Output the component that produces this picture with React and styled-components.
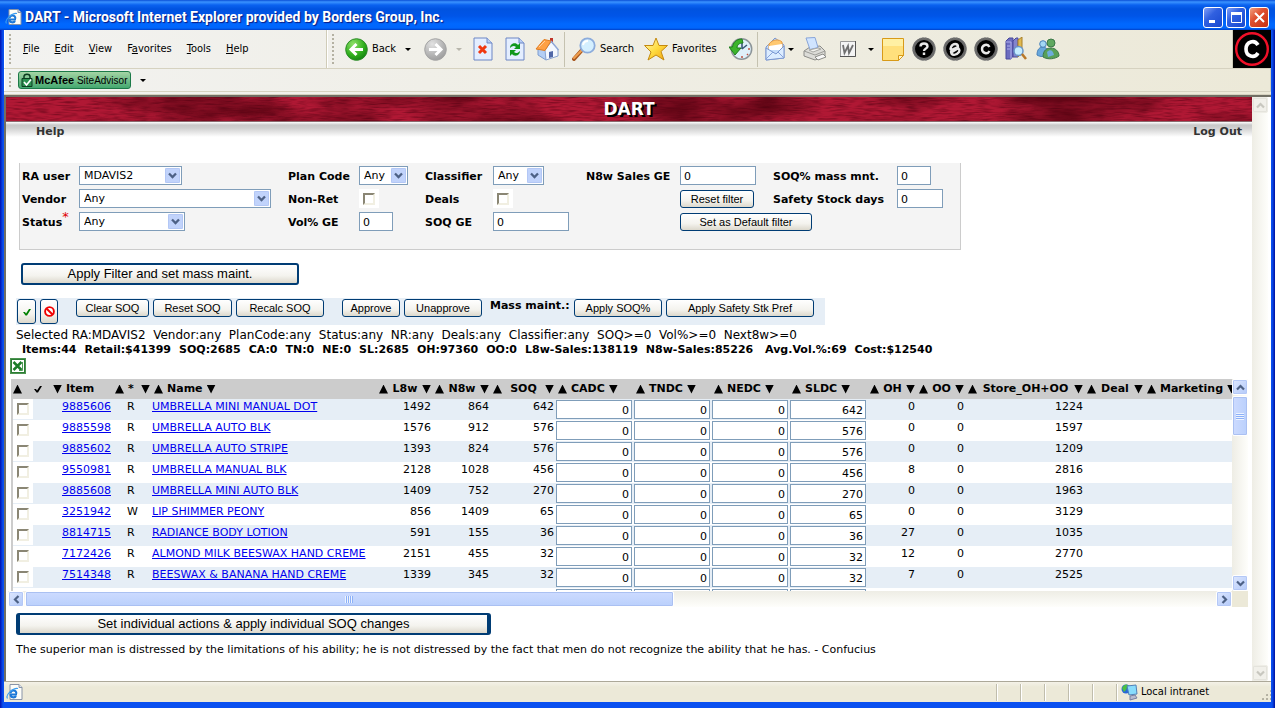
import React from 'react';
import styled, { createGlobalStyle, css } from 'styled-components';

const verdana = '"DejaVu Sans", Verdana, sans-serif';
const tahoma = '"DejaVu Sans Condensed", Tahoma, "DejaVu Sans", sans-serif';
const arial = '"Liberation Sans", Arial, sans-serif';

const GlobalStyle = createGlobalStyle`
	* { box-sizing: border-box; }
	body { margin: 0; background: #0a3fd0; }
	button, input, select { margin: 0; font: inherit; color: inherit; }
`;

const Frame = styled.div`
	display: flex;
	flex-direction: column;
	min-height: 100vh;
	padding: 0 4px 6px;
	font: 11px/14px ${verdana};
	color: #000;
	background: linear-gradient(90deg, #0010b0 0, #0a50f0 3px, #0a50f0 calc(100% - 3px), #0010a0 100%);
`;

/* title bar */

const TitleBar = styled.header`
	display: flex;
	align-items: center;
	gap: 3px;
	height: 30px;
	margin: 0 -4px;
	padding: 4px 6px 0 5px;
	background: linear-gradient(#0a4fd6 0, #3a93ff 2px, #0a62f0 5px, #0053e0 9px, #0055e8 16px, #0068ff 24px, #0066fc 28px, #0040c8 30px);
`;

const Title = styled.h1`
	flex: 1;
	margin: 0;
	font: bold 14px/18px Roboto, sans-serif;
	color: #fff;
	text-shadow: 1px 1px 1px #0a1a80;
	white-space: nowrap;
`;

const WindowButton = styled.button`
	display: grid;
	place-items: center;
	width: 20px;
	height: 21px;
	padding: 0;
	border: 1px solid #fff;
	border-radius: 3px;
	color: #fff;
	background: ${p => p.$close
		? 'linear-gradient(135deg, #f0a080, #e05030 40%, #c83010)'
		: 'linear-gradient(135deg, #80a0f8, #3060e0 40%, #1848d0)'};
`;

/* tool bars */

const ToolRow = styled.div`
	display: flex;
	height: ${p => p.$h}px;
	border-bottom: 1px solid #d6d2c0;
	background: linear-gradient(90deg, #f2f2f0, #ece9d8);
	font-family: ${tahoma};
`;

const Band = styled.div`
	display: flex;
	align-items: center;
	height: 100%;
	width: ${p => p.$w ? p.$w + 'px' : 'auto'};
	flex: ${p => p.$w ? 'none' : '1'};
	padding-left: 4px;
	border-right: 1px solid #d0ccb8;
	border-left: 1px solid #fff;
`;

const Grip = styled.span`
	width: 2px;
	height: ${p => p.$h}px;
	margin-right: ${p => p.$gap}px;
	background: repeating-linear-gradient(#b4b1a2 0, #b4b1a2 2px, transparent 2px, transparent 4px);
`;

const Menu = styled.nav`
	display: flex;
	gap: 15px;
`;

const MenuLink = styled.a`
	color: #000;
	text-decoration: none;
`;

const Tool = styled.button`
	display: flex;
	align-items: center;
	gap: 4px;
	width: ${p => p.$w}px;
	height: 30px;
	padding: 0;
	border: 0;
	background: none;
	flex: none;
	white-space: nowrap;
`;

const Divider = styled.span`
	width: 1px;
	height: 35px;
	margin-right: 7px;
	background: #c5c2b0;
`;

const Caret = styled.span`
	margin-left: ${p => p.$gap || 5}px;
	border: 3px solid transparent;
	border-top-color: ${p => p.$off ? '#b8b6ac' : '#000'};
	border-bottom: 0;
`;

const BrandTile = styled.div`
	display: grid;
	place-items: center;
	width: 38px;
	background: #000;
`;

const Advisor = styled.button`
	display: flex;
	align-items: center;
	gap: 2px;
	height: 18px;
	padding: 0 3px 0 2px;
	border: 1px solid #1c7a48;
	border-radius: 3px;
	background: linear-gradient(#a4d4a4, #44a870);
	font: 10px/14px ${arial};
	white-space: nowrap;

	b { font-size: 11px; }
`;

/* page */

const Content = styled.div`
	display: flex;
	flex: 1;
	padding-right: 3px;
	border: solid #716f64;
	border-width: 2px 0 0 2px;
	background: #fff;
`;

const Page = styled.main`
	flex: 1;
	min-width: 0;
`;

const Banner = styled.div`
	position: relative;
	height: 25px;
	border-bottom: 1px solid #8a6a6e;
	background: #a0142e;
	overflow: hidden;

	svg { position: absolute; inset: 0; width: 100%; height: 100%; }
`;

const BannerTitle = styled.h2`
	position: relative;
	margin: 0;
	font: bold 17px/24px ${verdana};
	text-align: center;
	color: #fff;
	text-shadow: 2px 2px #000;
`;

const TopLinks = styled.nav`
	display: flex;
	justify-content: space-between;
	height: 17px;
	padding: 3px 10px 0 30px;
	background: linear-gradient(#fff 0, #c8c8c8 3px, #cfcfcf 6px, #fff 15px);

	a { font-weight: bold; color: #333; text-decoration: none; }
`;

const Filters = styled.form`
	display: grid;
	grid-template-columns: 57px 209px 71px 66px 68px 93px 94px 93px 124px auto;
	grid-auto-rows: 19px;
	row-gap: 4px;
	align-items: center;
	width: 942px;
	height: 87px;
	margin: 24px 0 0 13px;
	padding: 3px 0 0 2px;
	border: 1px solid #ccc;
	border-top: 0;
	background: #f4f4f4;
`;

const Label = styled.label`
	padding-top: 2px;
	font-weight: bold;
	white-space: nowrap;

	sup { font-weight: normal; font-size: 13px; line-height: 0; color: #e00000; }
`;

const PickWrap = styled.span`
	position: relative;
	width: ${p => p.$w}px;
	height: 19px;

	svg { position: absolute; top: 2px; right: 2px; pointer-events: none; }
`;

const Pick = styled.select`
	appearance: none;
	width: 100%;
	height: 19px;
	padding: 1px 0 0 4px;
	border: 1px solid #7f9db9;
	border-radius: 0;
	background: #fff;
`;

const Field = styled.input`
	display: block;
	width: ${p => p.$w}px;
	height: 19px;
	padding: ${p => p.$num ? '1px 2px 0' : '1px 3px 0'};
	border: 1px solid #7f9db9;
	border-radius: 0;
	background: #fff;
	text-align: ${p => p.$num ? 'right' : 'left'};
`;

const TickBack = styled.span`
	display: grid;
	place-items: center;
	width: 20px;
	height: 19px;
	background: #fff;
`;

const Tick = styled.input`
	appearance: none;
	width: 12px;
	height: 12px;
	border: 2px solid;
	border-color: #8a8674 #f1efe2 #f1efe2 #8a8674;
	background: #fff;

	&:checked { background: #21a121; }
`;

const XpButton = styled.button`
	display: grid;
	place-items: center;
	width: ${p => p.$w}px;
	height: ${p => p.$h || 18}px;
	padding: 0;
	border: 1px solid #003c74;
	border-radius: 3px;
	background: linear-gradient(#fff, #f4f3ee 60%, #dcd8cc);
	font: 11px/14px ${arial};
	white-space: nowrap;
	${p => p.$span && css`grid-column: span ${p.$span};`}
	${p => p.$big && css`
		height: 22px;
		border-width: ${p.$big === 'wide' ? '2px 4px' : '2px'};
		font: 13px/16px ${arial};
	`}
`;

const ApplyRow = styled.div`
	padding: 13px 0 13px 15px;
`;

const Actions = styled.div`
	display: flex;
	align-items: flex-start;
	gap: 4px;
	width: 809px;
	height: 27px;
	margin-left: 10px;
	padding: 1px 1px 0;
	background: #e6eef6;
`;

const ActionGroup = styled.div`
	display: flex;
	gap: 4px;
	margin-right: ${p => p.$after}px;

	& > b { width: 80px; line-height: 14px; }
`;

const Summary = styled.p`
	margin: 3px 0 0 10px;
	font-size: 12px;
	white-space: pre;
`;

const Totals = styled.p`
	display: flex;
	gap: 8px;
	margin: 1px 0 0 16px;
	font-weight: bold;
	white-space: nowrap;
`;

const ExportLink = styled.a`
	display: block;
	width: 16px;
	height: 16px;
	margin: 1px 0 5px 4px;
`;

/* item grid */

const GridArea = styled.div`
	display: grid;
	grid-template-columns: 1fr 16px;
	margin: 0 4px 0 2px;
`;

const GridView = styled.div`
	height: 212px;
	margin-left: 3px;
	overflow: hidden;
`;

const Items = styled.table`
	table-layout: fixed;
	width: 100%;
	min-width: 1234px;
	border-spacing: 0;

	th, td { padding: 0; }
	th { height: 20px; background: #ccc; text-align: left; }
	td { height: 21px; vertical-align: top; white-space: nowrap; }
	tbody tr:nth-child(odd) { background: #e6eef6; }
	tbody td:first-child { border-left: 2px solid #ccc; }
	a { color: #0000ee; }
`;

const Cell = styled.td`
	text-align: ${p => p.$num ? 'right' : 'left'};
	padding: 1px ${p => p.$box ? 0 : 2}px 0 ${p => p.$left || 0}px !important;
`;

const HeadCell = styled.div`
	display: flex;
	align-items: center;
	justify-content: ${p => p.$spread ? 'space-between' : 'flex-start'};
	gap: ${p => p.$spread ? 0 : 4}px;
	padding: 0 2px;
	white-space: nowrap;
`;

const Sort = styled.button`
	display: block;
	width: 9px;
	height: 9px;
	padding: 0;
	border: 0;
	background: #000;
	clip-path: ${p => p.$down ? 'polygon(0 0, 100% 0, 50% 100%)' : 'polygon(50% 0, 100% 100%, 0 100%)'};
	flex: none;
	${p => p.$push && css`margin-left: auto;`}
`;

const RowTick = styled.span`
	display: block;
	width: 20px;
	height: 20px;
	padding: 4px 0 0 4px;
	background: #fff;

	input { display: block; }
`;

/* scroll bars */

const Scroll = styled.div`
	display: flex;
	flex-direction: ${p => p.$across ? 'row' : 'column'};
	gap: 1px;
	${p => p.$across ? 'height: 16px;' : 'width: 16px;'}
	background: ${p => p.$across
		? 'linear-gradient(#eeede5, #fefefb)'
		: 'linear-gradient(90deg, #eeede5, #fefefb)'};
`;

const ScrollButton = styled.button`
	display: grid;
	place-items: center;
	width: 16px;
	height: 16px;
	padding: 0;
	border: 1px solid ${p => p.$off ? '#eeede6' : '#fff'};
	border-radius: 2px;
	box-shadow: inset 0 0 0 1px ${p => p.$off ? '#e4e3dc' : '#b4c8f6'};
	background: ${p => p.$off ? '#f1f0ea' : 'linear-gradient(135deg, #dde7ff, #b4caf9)'};
	color: ${p => p.$off ? '#c8c7bf' : '#4d6185'};
	flex: none;
`;

const Thumb = styled.div`
	display: grid;
	place-items: center;
	border: 1px solid #fff;
	border-radius: 2px;
	box-shadow: inset 0 0 0 1px #aac0f2;
	background: linear-gradient(${p => p.$across ? '180deg' : '90deg'}, #cddbff, #bad0fc);
	${p => p.$across ? 'width: 53%;' : 'height: 40px;'}

	&::after {
		content: '';
		width: 8px;
		height: 7px;
		background: repeating-linear-gradient(${p => p.$across ? '90deg' : '180deg'}, #eef4fe 0, #eef4fe 1px, #8cb0f8 1px, #8cb0f8 2px);
	}
`;

const Fill = styled.span`
	flex: 1;
`;

const Corner = styled.span`
	background: #ece9d8;
`;

const Closing = styled.div`
	padding: 6px 0 0 10px;

	p { margin: 8px 0 0; }
`;

/* status bar */

const StatusBar = styled.footer`
	display: flex;
	align-items: center;
	height: 21px;
	padding-left: 2px;
	border-top: 1px solid #aca899;
	background: linear-gradient(#f4f2e8, #ece9d8 5px);
	font-family: ${tahoma};
`;

const Pane = styled.span`
	display: flex;
	align-items: center;
	gap: 3px;
	width: ${p => p.$w}px;
	height: 17px;
	padding-left: 4px;
	border-left: 1px solid #c0bdac;
	box-shadow: inset 1px 0 #fff;
	white-space: nowrap;
`;

const SizeGrip = styled.span`
	align-self: flex-end;
	width: 11px;
	height: 11px;
	margin-left: auto;
	clip-path: polygon(100% 0, 100% 100%, 0 100%);
	background: conic-gradient(#b4b1a2 90deg, transparent 0) 0 0 / 4px 4px;
`;

/* icons */

const Chevron = ({ dir = 'down' }) => {
	const turn = { down: 0, left: 90, up: 180, right: 270 }[dir];
	return (
		<svg width="9" height="9" viewBox="0 0 9 9">
			<path d="M1 2.5 4.5 6 8 2.5" fill="none" stroke="currentColor" strokeWidth="2.2" transform={`rotate(${turn} 4.5 4.5)`} />
		</svg>
	);
};

const PickArrow = () => (
	<svg width="15" height="15" viewBox="0 0 15 15">
		<rect width="15" height="15" rx="1" fill="#c1d3fb" />
		<rect x=".5" y=".5" width="14" height="14" rx="1" fill="none" stroke="#b3c7f5" />
		<path d="m4 5.5 3.5 3.5L11 5.5" fill="none" stroke="#4d6185" strokeWidth="2.3" />
	</svg>
);

const IeIcon = () => (
	<svg width="17" height="17" viewBox="0 0 17 17">
		<path d="M4 .5h9l3 3V15.500H4z" fill="#fdfdf8" stroke="#8894a8" />
		<path d="M13 .5v3h3" fill="#dde4f0" stroke="#8894a8" />
		<path d="M11 10.500H4.500C4.500 14 9 14 10 12M4.500 9C5 5.500 10 5.500 10.500 9.500" fill="none" stroke="#1c78d8" strokeWidth="2" />
		<path d="M1.500 14.500C-1 11 7 3.500 12 4.500" fill="none" stroke="#3a9cf0" strokeWidth="1.200" />
	</svg>
);

const ArrowBall = ({ off }) => (
	<svg width="23" height="23" viewBox="0 0 23 23">
		<defs>
			<radialGradient id={off ? 'ballOff' : 'ballOn'} cx=".35" cy=".25" r=".85">
				<stop offset="0" stopColor={off ? '#e2e2e2' : '#8fe06a'} />
				<stop offset=".6" stopColor={off ? '#b4b4b4' : '#2fae1c'} />
				<stop offset="1" stopColor={off ? '#989898' : '#0f7a10'} />
			</radialGradient>
		</defs>
		<circle cx="11.5" cy="11.5" r="10.8" fill={`url(#${off ? 'ballOff' : 'ballOn'})`} stroke={off ? '#a4a4a4' : '#2c8c28'} />
		<path
			d="M18 11.5H6.5M11.5 6 6 11.5l5.500 5.500"
			transform={off ? 'rotate(180 11.5 11.5)' : undefined}
			fill="none" stroke="#fff" strokeWidth="3"
		/>
	</svg>
);

const Sheet = ({ children }) => (
	<svg width="20" height="24" viewBox="0 0 20 24">
		<path d="M1 1h13l5 5v17H1z" fill="#e4eeff" stroke="#6d86c4" />
		<path d="M14 1v5h5" fill="#b8cdf4" stroke="#6d86c4" />
		{children}
	</svg>
);

const HomeIcon = () => (
	<svg width="24" height="24" viewBox="0 0 24 24">
		<path d="M15 1h3v6h-3z" fill="#c03428" />
		<path d="M3 12v6l8 5V13z" fill="#b4cef4" stroke="#7c9cd0" />
		<path d="m10 13 6-8 7 7v7l-12 4z" fill="#f4f8ff" stroke="#8aa4d0" />
		<path d="m14 15 4-1v6l-4 1z" fill="#5068a8" />
		<path d="M1 12 9 2.500 16 4l-6 9.500z" fill="#ffa044" stroke="#e07c20" />
		<path d="m4 10 6-6" stroke="#ffd0a0" />
		<path d="m16 4 7.500 9" stroke="#90a8d8" strokeWidth="1.500" />
	</svg>
);

const Magnifier = () => (
	<svg width="24" height="24" viewBox="0 0 24 24">
		<path d="m10 13-8 9" stroke="#a85820" strokeWidth="4" strokeLinecap="round" />
		<path d="m10 13-8 8" stroke="#f0a050" strokeWidth="2" strokeLinecap="round" />
		<circle cx="15.5" cy="8.5" r="7.2" fill="#d4efff" stroke="#8cacdc" strokeWidth="1.8" />
		<path d="M11 8a5 5 0 0 1 5-4" fill="none" stroke="#fff" strokeWidth="2" />
	</svg>
);

const StarIcon = () => (
	<svg width="24" height="24" viewBox="0 0 24 24">
		<defs>
			<linearGradient id="gold" x2="1" y2="1">
				<stop offset="0" stopColor="#fffac0" />
				<stop offset=".5" stopColor="#ffdc40" />
				<stop offset="1" stopColor="#f0a010" />
			</linearGradient>
		</defs>
		<path d="m12 1 3 7.500h8.500L17 14.500l3 8.500-8-5-8 5 3-8-6.500-6.500H9z" fill="url(#gold)" stroke="#c48a10" strokeLinejoin="round" />
	</svg>
);

const HistoryIcon = () => (
	<svg width="24" height="24" viewBox="0 0 24 24">
		<circle cx="12.5" cy="12" r="10.2" fill="#dff0fa" stroke="#8c9498" strokeWidth="1.5" />
		<path d="M13 12V5M13 12l5-4" stroke="#385878" strokeWidth="1.6" />
		<path d="M19 12h2M13 19v2M18 17l1 1" stroke="#c05040" strokeWidth="1.5" />
		<path d="M13 2C7 2 4 6 3.500 10H0l6 8 6-7H8c0-3 2-5 6-5z" fill="#3cb42c" stroke="#1c7c1c" />
	</svg>
);

const MailIcon = () => (
	<svg width="21" height="24" viewBox="0 0 21 24">
		<path d="M1 10 10 1l9 7v13L1 23z" fill="#c4dcfa" stroke="#7c98d0" />
		<path d="M4 7c4-5 10-5 13-2v7H4z" fill="#ffc870" stroke="#e89c40" />
		<path d="m4 9 13-2v6H4z" fill="#fff" />
		<path d="m1 11 10 6 8-8v12L1 23z" fill="#dcecff" stroke="#7c98d0" />
		<path d="m1 22 7-7M19 21l-6-6" stroke="#88a4dc" />
	</svg>
);

const PrinterIcon = () => (
	<svg width="24" height="24" viewBox="0 0 24 24">
		<path d="m1 14 6-4 10-1 5 5v5l-10 4-11-4z" fill="#dcdcd8" stroke="#8c8c88" />
		<path d="m1 14 11 4 10-4" fill="none" stroke="#9c9c98" />
		<path d="m3 1 9-.5 3 10-8 2z" fill="#d0e4ff" stroke="#88a4d8" />
		<path d="m6 13 9-2 3 1-8 3z" fill="#f4f4f0" stroke="#a8a8a4" />
		<path d="m12 20 8-3 3 3-8 3z" fill="#f8f8f8" stroke="#8c8c88" />
	</svg>
);

const WordIcon = () => (
	<svg width="16" height="16" viewBox="0 0 16 16">
		<path d="M.5.5h15v15H.5z" fill="#f4f4f4" stroke="#999" />
		<path d="M15.500 0v15.500H0" fill="none" stroke="#555" />
		<path d="m3 4 1.500 8L8 5l1 7 4-8" fill="none" stroke="#707070" strokeWidth="1.8" />
	</svg>
);

const NoteIcon = () => (
	<svg width="22" height="23" viewBox="0 0 22 23">
		<path d="M.5.5h21v17l-5 5H.5z" fill="#ffe07c" stroke="#d89a18" />
		<path d="M1 1h20v7H1z" fill="#fff0a4" />
		<path d="M21.500 17.500h-5v5z" fill="#fff6c8" stroke="#d89a18" />
	</svg>
);

const Badge = ({ children }) => (
	<svg width="24" height="24" viewBox="0 0 24 24">
		<circle cx="12" cy="12" r="10.3" fill="#000" stroke="#686868" strokeWidth="2.6" />
		<circle cx="12" cy="12" r="11.3" fill="none" stroke="#8a8a8a" strokeDasharray="1.5 1.5" />
		<g fill="none" stroke="#e8e8e8" strokeWidth="2.4">{children}</g>
	</svg>
);

const BooksIcon = () => (
	<svg width="22" height="24" viewBox="0 0 22 24">
		<path d="m1 4 3-3h4v18l-2 3H1z" fill="#6c6cc0" stroke="#48489c" />
		<path d="M1 5h5v17M2 9h3M2 12h3" fill="none" stroke="#b0b0ec" />
		<path d="m8 4 3-3h2v19H8z" fill="#8484cc" stroke="#48489c" />
		<path d="m13 3 4-3v16l-4 4z" fill="#e0b850" stroke="#a88028" />
		<circle cx="13.5" cy="14" r="4.5" fill="#c4ecff" stroke="#6894c8" strokeWidth="1.5" />
		<path d="m17 17 4 5" stroke="#b87828" strokeWidth="2.5" />
	</svg>
);

const PeopleIcon = () => (
	<svg width="24" height="24" viewBox="0 0 24 24">
		<path d="M1 18c0-6 3-8 6-8s6 3 5 8c-3 2-8 2-11 0z" fill="#68a8dc" stroke="#4880b8" />
		<circle cx="7" cy="7" r="3.3" fill="#a4d8f4" stroke="#4880b8" />
		<path d="M7 20c0-7 4-9 8-9s8 3 8 8c-4 3-11 4-16 1z" fill="#58a058" stroke="#3c7848" />
		<circle cx="15" cy="6" r="4" fill="#60a860" stroke="#3c7848" />
		<path d="M11 15c3-3 6-2 7 3l-6 2z" fill="#6cacdc" />
	</svg>
);

const BrandIcon = () => (
	<svg width="36" height="36" viewBox="0 0 36 36">
		<circle cx="18" cy="18" r="15.8" fill="#000" stroke="#f01028" strokeWidth="2.4" />
		<path d="M24 14c-3.500-6-12-3.500-12 4s8.500 10 12 4" fill="none" stroke="#fff" strokeWidth="3.6" />
	</svg>
);

const LockIcon = () => (
	<svg width="12" height="14" viewBox="0 0 12 14">
		<path d="M3 6V3.500C3 .5 9 .5 9 3.500V6" fill="none" stroke="#0c3c20" strokeWidth="1.5" />
		<path d="M1 5.500h10v8H1z" fill="#2c9050" stroke="#0c3c20" />
		<path d="m3 9 2.500 3L10 6.500" fill="none" stroke="#fff" strokeWidth="1.7" />
	</svg>
);

const CheckMark = ({ color }) => (
	<svg width="8" height="8" viewBox="0 0 8 8">
		<path d="M0 4h2l1 1.500L6 1h2L4 7.500H2.500z" fill={color} />
	</svg>
);

const BlockIcon = () => (
	<svg width="11" height="11" viewBox="0 0 11 11">
		<circle cx="5.5" cy="5.5" r="4.4" fill="#fff" stroke="#f00000" strokeWidth="1.9" />
		<path d="m2.500 2.500 6 6" stroke="#f00000" strokeWidth="1.9" />
	</svg>
);

const ExcelIcon = () => (
	<svg width="16" height="16" viewBox="0 0 16 16">
		<path d="M1 1h14v14H1z" fill="#fff" stroke="#2c7c34" strokeWidth="2" />
		<path d="M.5.5h15v15H.5z" fill="none" stroke="#6cac6c" strokeDasharray="1 1" />
		<path d="m3.500 4 8 8M11.500 4l-8 8" stroke="#1c7c28" strokeWidth="2.5" />
		<path d="M12.500 4v8.500H9" fill="none" stroke="#4c9c54" />
	</svg>
);

const NetIcon = () => (
	<svg width="17" height="17" viewBox="0 0 17 17">
		<circle cx="5" cy="5" r="4.5" fill="#2868d8" />
		<path d="M1 4c2-4 5-4 6-3L5 6 3 8z" fill="#4cc040" />
		<path d="m6 2 9-1 1 9-8 1z" fill="#88dcfc" stroke="#5080b8" />
		<path d="m9 12 5-1 2 3-7 2z" fill="#b8bcd0" stroke="#7880a0" />
	</svg>
);

const Fabric = () => (
	<svg aria-hidden="true" preserveAspectRatio="none">
		<filter id="weave" x="0" y="0" width="100%" height="100%" colorInterpolationFilters="sRGB">
			<feTurbulence type="fractalNoise" baseFrequency="0.07 0.6" numOctaves="2" seed="4" />
			<feColorMatrix values="0 0 0 0 0.3  0 0 0 0 0  0 0 0 0 0.06  1.2 0 0 0 -0.5" />
		</filter>
		<filter id="clouds" x="0" y="0" width="100%" height="100%" colorInterpolationFilters="sRGB">
			<feTurbulence type="fractalNoise" baseFrequency="0.008 0.025" numOctaves="4" seed="9" />
			<feColorMatrix values="0 0 0 0 0.38  0 0 0 0 0.02  0 0 0 0 0.08  3 0 0 0 -1.15" />
		</filter>
		<rect width="100%" height="100%" fill="#b01834" />
		<rect width="100%" height="100%" filter="url(#clouds)" />
		<rect width="100%" height="100%" filter="url(#weave)" />
	</svg>
);

/* data */

const menus = [['', 'F', 'ile'], ['', 'E', 'dit'], ['', 'V', 'iew'], ['F', 'a', 'vorites'], ['', 'T', 'ools'], ['', 'H', 'elp']];

const totals = [
	'Items:44', 'Retail:$41399', 'SOQ:2685', 'CA:0', 'TN:0', 'NE:0', 'SL:2685', 'OH:97360', 'OO:0',
	'L8w-Sales:138119', 'N8w-Sales:85226', ' Avg.Vol.%:69', 'Cost:$12540',
];

const widths = [40, 75, 26, 225, 56, 58, 65, 78, 78, 78, 78, 49, 49, 119, 60];

const rows = [
	['9885606', 'R', 'UMBRELLA MINI MANUAL DOT', 1492, 864, 642, 0, 0, 1224],
	['9885598', 'R', 'UMBRELLA AUTO BLK', 1576, 912, 576, 0, 0, 1597],
	['9885602', 'R', 'UMBRELLA AUTO STRIPE', 1393, 824, 576, 0, 0, 1209],
	['9550981', 'R', 'UMBRELLA MANUAL BLK', 2128, 1028, 456, 8, 0, 2816],
	['9885608', 'R', 'UMBRELLA MINI AUTO BLK', 1409, 752, 270, 0, 0, 1963],
	['3251942', 'W', 'LIP SHIMMER PEONY', 856, 1409, 65, 0, 0, 3129],
	['8814715', 'R', 'RADIANCE BODY LOTION', 591, 155, 36, 27, 0, 1035],
	['7172426', 'R', 'ALMOND MILK BEESWAX HAND CREME', 2151, 455, 32, 12, 0, 2770],
	['7514348', 'R', 'BEESWAX & BANANA HAND CREME', 1339, 345, 32, 7, 0, 2525],
	['', '', '', '', '', '', '', '', ''],
];

const PickBox = ({ id, w, value }) => (
	<PickWrap $w={w}>
		<Pick id={id} defaultValue={value}>
			<option>{value}</option>
		</Pick>
		<PickArrow />
	</PickWrap>
);

const Head = ({ text, spread }) => (
	<th>
		<HeadCell $spread={spread}>
			<Sort aria-label={`Sort ${text} up`} />
			{text}
			<Sort $down aria-label={`Sort ${text} down`} />
		</HeadCell>
	</th>
);

const ItemRow = ({ row }) => {
	const [item, code, name, l8w, n8w, soq, oh, oo, store] = row;
	const dcs = [['CADC', 0], ['TNDC', 0], ['NEDC', 0], ['SLDC', soq]];
	return (
		<tr>
			<td><RowTick><Tick type="checkbox" aria-label={`Select ${item}`} /></RowTick></td>
			<Cell $left={11}><a href="#item">{item}</a></Cell>
			<Cell $left={1}>{code}</Cell>
			<Cell><a href="#item">{name}</a></Cell>
			<Cell $num>{l8w}</Cell>
			<Cell $num>{n8w}</Cell>
			<Cell $num>{soq}</Cell>
			{dcs.map(([dc, qty]) => (
				<Cell $box key={dc}>
					<Field $w={76} $num aria-label={`${dc} ${item}`} defaultValue={item ? qty : ''} />
				</Cell>
			))}
			<Cell $num>{oh}</Cell>
			<Cell $num>{oo}</Cell>
			<Cell $num>{store}</Cell>
			<td />
			<td />
		</tr>
	);
};

const Toolbar = () => (
	<>
		<ToolRow $h={39}>
			<Band $w={323}>
				<Grip $h={31} $gap={12} />
				<Menu>
					{menus.map(([a, key, b]) => (
						<MenuLink href="#menu" key={a + key + b}>{a}<u>{key}</u>{b}</MenuLink>
					))}
				</Menu>
			</Band>
			<Band>
				<Grip $h={31} $gap={11} />
				<Tool $w={79}><ArrowBall />Back<Caret /></Tool>
				<Tool $w={49}><ArrowBall off /><Caret $off /></Tool>
				<Tool $w={32} aria-label="Stop">
					<Sheet><path d="m6 9 7 7M13 9l-7 7" stroke="#f03810" strokeWidth="3" /></Sheet>
				</Tool>
				<Tool $w={30} aria-label="Refresh">
					<Sheet>
						<path d="M5 11c0-5 6-6 8-3l2-2v6H9l2-2c-2-2-4-1-6 1zM15 14c0 5-6 6-8 3l-2 2v-6h6l-2 2c2 2 4 1 6-1z" fill="#10981c" />
					</Sheet>
				</Tool>
				<Tool $w={29} aria-label="Home"><HomeIcon /></Tool>
				<Divider />
				<Tool $w={72}><Magnifier />Search</Tool>
				<Tool $w={85}><StarIcon />Favorites</Tool>
				<Tool $w={28} aria-label="History"><HistoryIcon /></Tool>
				<Divider />
				<Tool $w={38} aria-label="Mail"><MailIcon /><Caret $gap={-2} /></Tool>
				<Tool $w={37} aria-label="Print"><PrinterIcon /></Tool>
				<Tool $w={42} aria-label="Edit"><WordIcon /><Caret $gap={8} /></Tool>
				<Tool $w={30} aria-label="Discuss"><NoteIcon /></Tool>
				<Tool $w={31} aria-label="Help">
					<Badge><path d="M8.500 9.500c0-4 7-4 7 0 0 2-3.500 2-3.500 4.500M12 15.500V18" /></Badge>
				</Tool>
				<Tool $w={31} aria-label="Encarta">
					<Badge><path d="m8 13 7-3c0-4-5-4-7 0-1 2 0 4 2 3M8 14c0 5 5 5 8 1 1-2 0-4-2-3l-5 3" /></Badge>
				</Tool>
				<Tool $w={31} aria-label="Circuit">
					<Badge><path d="M15.500 10c-2-4-7.500-2-7.500 2s5.500 6 7.500 2" /></Badge>
				</Tool>
				<Tool $w={31} aria-label="Research"><BooksIcon /></Tool>
				<Tool $w={24} aria-label="Messenger"><PeopleIcon /></Tool>
			</Band>
			<BrandTile><BrandIcon /></BrandTile>
		</ToolRow>
		<ToolRow $h={23}>
			<Band>
				<Grip $h={15} $gap={7} />
				<Advisor><LockIcon /><span><b>McAfee</b> SiteAdvisor</span></Advisor>
				<Caret $gap={9} />
			</Band>
		</ToolRow>
		<ToolRow $h={3} />
	</>
);

const FilterPanel = () => (
	<Filters onSubmit={e => e.preventDefault()}>
		<Label htmlFor="user">RA user</Label>
		<PickBox id="user" w={103} value="MDAVIS2" />
		<Label htmlFor="plan">Plan Code</Label>
		<PickBox id="plan" w={49} value="Any" />
		<Label htmlFor="classifier">Classifier</Label>
		<PickBox id="classifier" w={51} value="Any" />
		<Label htmlFor="n8w">N8w Sales GE</Label>
		<Field id="n8w" $w={76} defaultValue="0" />
		<Label htmlFor="mass">SOQ% mass mnt.</Label>
		<Field id="mass" $w={34} defaultValue="0" />

		<Label htmlFor="vendor">Vendor</Label>
		<PickBox id="vendor" w={192} value="Any" />
		<Label htmlFor="nonret">Non-Ret</Label>
		<TickBack><Tick id="nonret" type="checkbox" /></TickBack>
		<Label htmlFor="deals">Deals</Label>
		<TickBack><Tick id="deals" type="checkbox" /></TickBack>
		<span />
		<XpButton $w={74}>Reset filter</XpButton>
		<Label htmlFor="safety">Safety Stock days</Label>
		<Field id="safety" $w={46} defaultValue="0" />

		<Label htmlFor="status">Status<sup>*</sup></Label>
		<PickBox id="status" w={106} value="Any" />
		<Label htmlFor="vol">Vol% GE</Label>
		<Field id="vol" $w={34} defaultValue="0" />
		<Label htmlFor="soq">SOQ GE</Label>
		<Field id="soq" $w={76} defaultValue="0" />
		<span />
		<XpButton $w={132} $span={3}>Set as Default filter</XpButton>
	</Filters>
);

const ItemGrid = () => (
	<GridArea>
		<GridView>
			<Items>
				<colgroup>
					{widths.map((w, i) => <col key={i} style={{ width: w }} />)}
					<col />
				</colgroup>
				<thead>
					<tr>
						<th><HeadCell><Sort aria-label="Sort ticks" /><Fill /><CheckMark color="#000" /><Fill /></HeadCell></th>
						<th>
							<HeadCell>
								<Sort $down aria-label="Sort ticks down" />Item
								<Sort $push aria-label="Sort Item up" />
							</HeadCell>
						</th>
						<th><HeadCell $spread>*<Sort $down aria-label="Sort code" /></HeadCell></th>
						<Head text="Name" />
						<Head text="L8w" spread />
						<Head text="N8w" spread />
						<Head text="SOQ" spread />
						<Head text="CADC" />
						<Head text="TNDC" />
						<Head text="NEDC" />
						<Head text="SLDC" />
						<Head text="OH" spread />
						<Head text="OO" spread />
						<Head text="Store_OH+OO" spread />
						<Head text="Deal" spread />
						<Head text="Marketing" />
					</tr>
				</thead>
				<tbody>
					{rows.map((row, i) => <ItemRow row={row} key={i} />)}
				</tbody>
			</Items>
		</GridView>
		<Scroll>
			<ScrollButton aria-label="Up"><Chevron dir="up" /></ScrollButton>
			<Thumb />
			<Fill />
			<ScrollButton aria-label="Down"><Chevron /></ScrollButton>
		</Scroll>
		<Scroll $across>
			<ScrollButton aria-label="Left"><Chevron dir="left" /></ScrollButton>
			<Thumb $across />
			<Fill />
			<ScrollButton aria-label="Right"><Chevron dir="right" /></ScrollButton>
		</Scroll>
		<Corner />
	</GridArea>
);

export default function App() {
	return (
		<Frame>
			<GlobalStyle />
			<TitleBar>
				<IeIcon />
				<Title>DART - Microsoft Internet Explorer provided by Borders Group, Inc.</Title>
				<WindowButton aria-label="Minimize">
					<svg width="13" height="13"><path d="M2 9h6v3H2z" fill="#fff" /></svg>
				</WindowButton>
				<WindowButton aria-label="Maximize">
					<svg width="13" height="13"><path d="M1.500 1.500h10v10h-10z" fill="none" stroke="#fff" /><path d="M1 1h11v3H1z" fill="#fff" /></svg>
				</WindowButton>
				<WindowButton $close aria-label="Close">
					<svg width="13" height="13"><path d="m2 2 9 9M11 2l-9 9" stroke="#fff" strokeWidth="2" /></svg>
				</WindowButton>
			</TitleBar>
			<Toolbar />
			<Content>
				<Page>
					<Banner>
						<Fabric />
						<BannerTitle>DART</BannerTitle>
					</Banner>
					<TopLinks>
						<a href="#help">Help</a>
						<a href="#logout">Log Out</a>
					</TopLinks>
					<FilterPanel />
					<ApplyRow>
						<XpButton $w={278} $big="plain">Apply Filter and set mass maint.</XpButton>
					</ApplyRow>
					<Actions>
						<ActionGroup $after={14}>
							<XpButton $w={19} $h={25} aria-label="Approve ticked"><CheckMark color="#008000" /></XpButton>
							<XpButton $w={18} $h={25} aria-label="Block ticked"><BlockIcon /></XpButton>
						</ActionGroup>
						<ActionGroup $after={14}>
							<XpButton $w={73}>Clear SOQ</XpButton>
							<XpButton $w={79}>Reset SOQ</XpButton>
							<XpButton $w={88}>Recalc SOQ</XpButton>
						</ActionGroup>
						<ActionGroup $after={4}>
							<XpButton $w={58}>Approve</XpButton>
							<XpButton $w={78}>Unapprove</XpButton>
						</ActionGroup>
						<ActionGroup $after={0}>
							<b>Mass maint.:</b>
							<XpButton $w={88}>Apply SOQ%</XpButton>
							<XpButton $w={148}>Apply Safety Stk Pref</XpButton>
						</ActionGroup>
					</Actions>
					<Summary>{'Selected RA:MDAVIS2  Vendor:any  PlanCode:any  Status:any  NR:any  Deals:any  Classifier:any  SOQ>=0  Vol%>=0  Next8w>=0'}</Summary>
					<Totals>
						{totals.map(t => <span key={t}>{t.replace(' ', '\u00a0')}</span>)}
					</Totals>
					<ExportLink href="#export" aria-label="Export to Excel"><ExcelIcon /></ExportLink>
					<ItemGrid />
					<Closing>
						<XpButton $w={475} $big="wide">{'Set individual actions & apply individual SOQ changes'}</XpButton>
						<p>The superior man is distressed by the limitations of his ability; he is not distressed by the fact that men do not recognize the ability that he has. - Confucius</p>
					</Closing>
				</Page>
				<Scroll>
					<ScrollButton $off disabled aria-label="Page up"><Chevron dir="up" /></ScrollButton>
					<Fill />
					<ScrollButton $off disabled aria-label="Page down"><Chevron /></ScrollButton>
				</Scroll>
			</Content>
			<StatusBar>
				<IeIcon />
				<Fill />
				<Pane $w={24} /><Pane $w={24} /><Pane $w={24} /><Pane $w={24} /><Pane $w={24} />
				<Pane $w={155}><NetIcon />Local intranet<SizeGrip /></Pane>
			</StatusBar>
		</Frame>
	);
}
